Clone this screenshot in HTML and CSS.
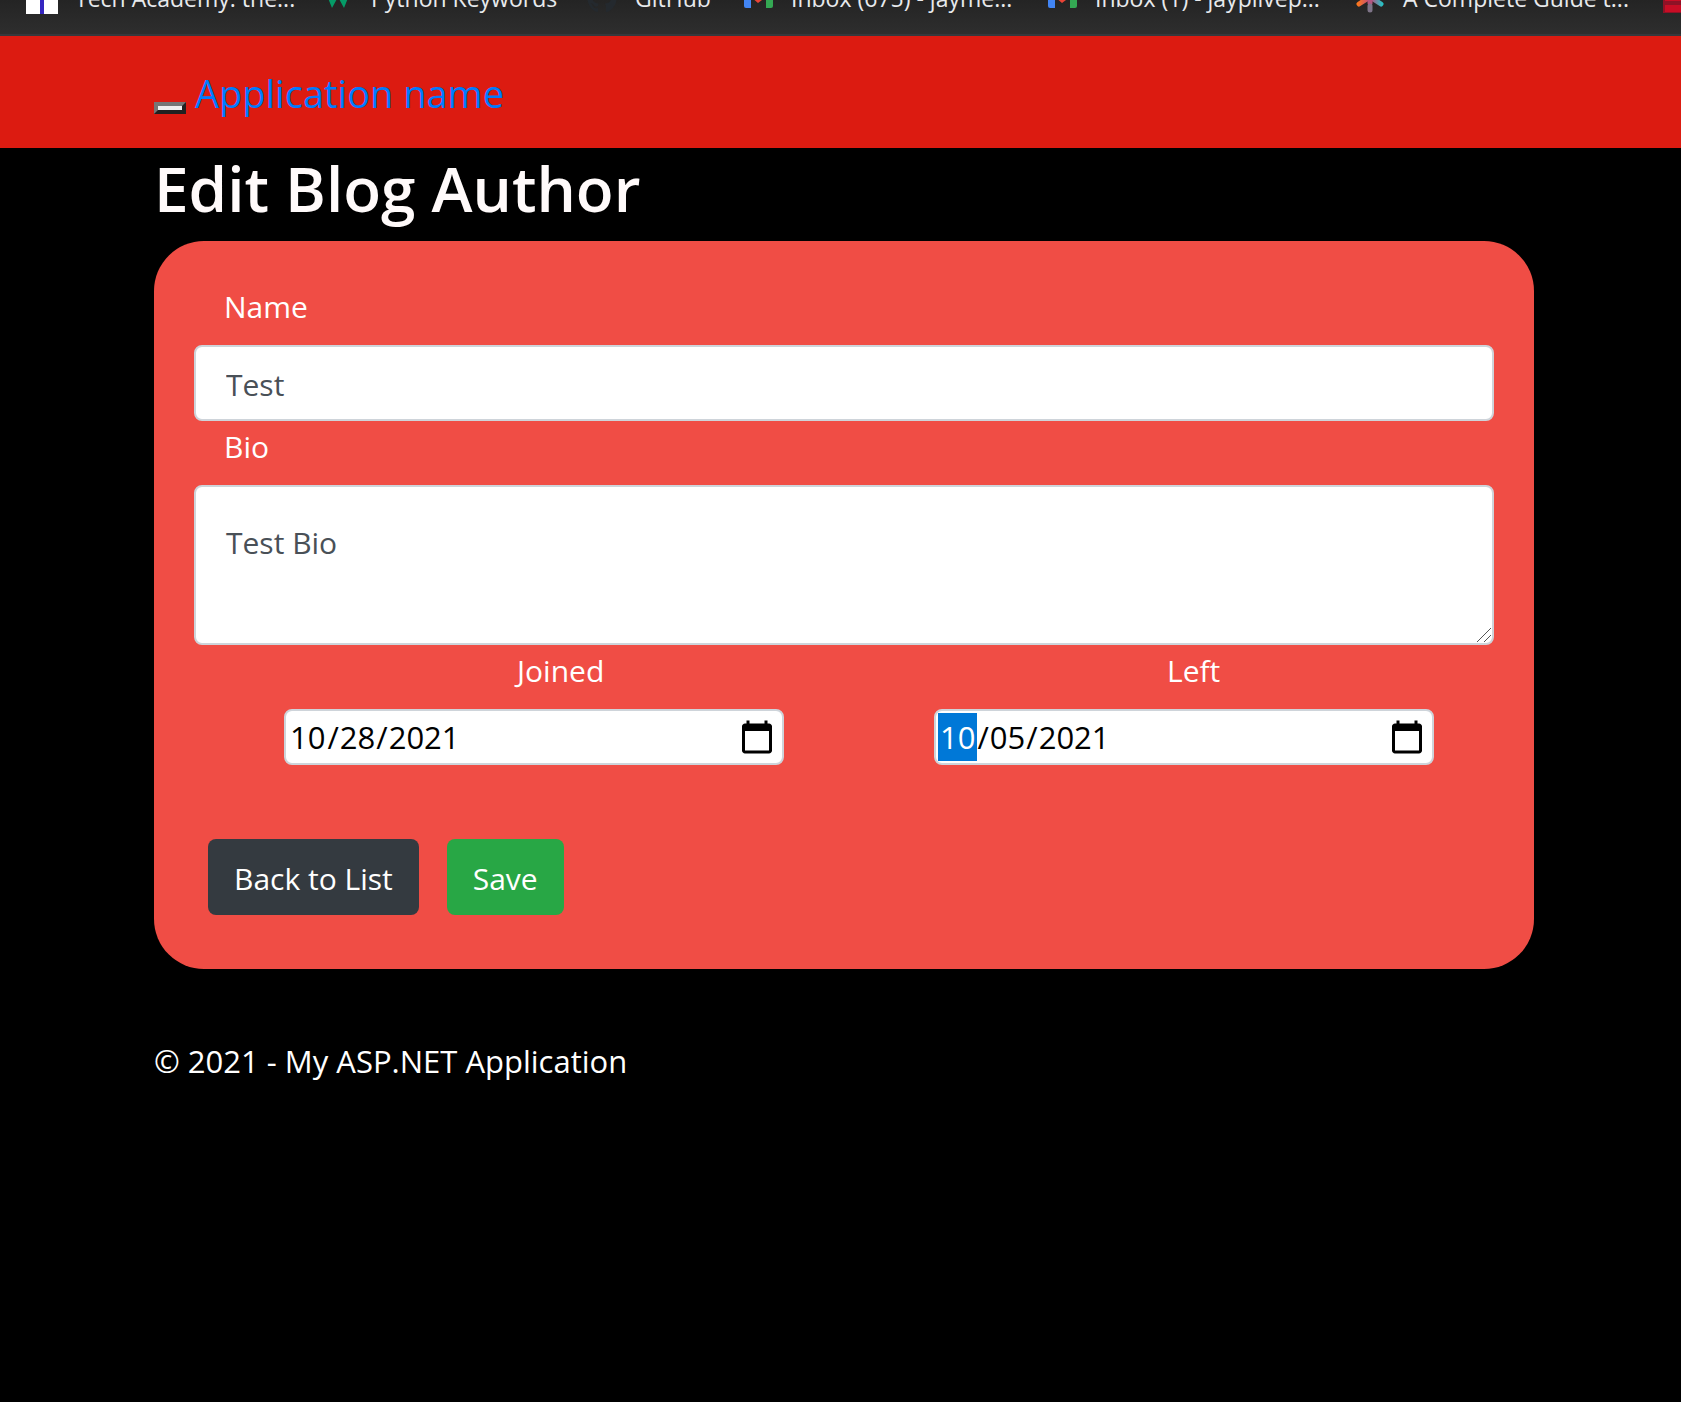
FILE: index.html
```html
<!DOCTYPE html>
<html lang="en-US">
<head>
<meta charset="utf-8">
<meta name="viewport" content="width=device-width, initial-scale=1">
<title>Edit Blog Author</title>
<link rel="stylesheet" href="styles.css">
</head>
<body>
<nav class="bookmarks" aria-label="Bookmarks">
  <a class="bookmark" href="#">
    <svg class="bookmark-icon" viewBox="0 0 32 32" aria-hidden="true"><path fill="#fff" d="M0 0h32v32H0z"/><path fill="#3526c0" d="M14 0h4v32h-4z"/></svg>
    <span>Tech Academy: the...</span>
  </a>
  <a class="bookmark" href="#">
    <svg class="bookmark-icon" viewBox="0 0 32 32" aria-hidden="true"><path fill="#059b67" d="M2 6h5l3 8 4-8h4l4 8 3-8h5l-8 20-6-11-6 11z"/></svg>
    <span>Python Keywords</span>
  </a>
  <a class="bookmark" href="#">
    <svg class="bookmark-icon" viewBox="0 0 32 32" aria-hidden="true"><path fill="#24292e" d="M16 1a15 15 0 0 0-5 29c1 0 1-.4 1-1v-3c-4 1-5-1-5.500-2.500C6 22 5 21.500 4.500 21c1.500 0 2.500 1 3 2 1.200 2 3 1.700 4.500 1 .1-1 .6-2 1-2.300-4-.5-7-2-7-7.200 0-1.700.6-3 1.500-4-.2-.5-.7-2 .1-4 0 0 1.300-.4 4.200 1.500a15 15 0 0 1 8 0C22.700 6 24 6.500 24 6.500c.8 2 .3 3.500.1 4 1 1 1.500 2.300 1.500 4 0 5.200-3 6.700-7 7.200.7.600 1.400 1.600 1.400 3.300v4c0 .6 0 1 1 1a15 15 0 0 0-5-29z"/></svg>
    <span>GitHub</span>
  </a>
  <a class="bookmark" href="#">
    <svg class="bookmark-icon" viewBox="0 0 32 32" aria-hidden="true"><path fill="#4285f4" d="M2 8h7v18H4a2 2 0 0 1-2-2z"/><path fill="#34a853" d="M24 8h7v16a2 2 0 0 1-2 2h-5z"/><path fill="#ea4335" d="M9 8l7 6 8-6v7l-8 6-7-6z"/></svg>
    <span>Inbox (675) - jayme...</span>
  </a>
  <a class="bookmark" href="#">
    <svg class="bookmark-icon" viewBox="0 0 32 32" aria-hidden="true"><path fill="#4285f4" d="M2 8h7v18H4a2 2 0 0 1-2-2z"/><path fill="#34a853" d="M24 8h7v16a2 2 0 0 1-2 2h-5z"/><path fill="#ea4335" d="M9 8l7 6 8-6v7l-8 6-7-6z"/></svg>
    <span>Inbox (1) - jayplivep...</span>
  </a>
  <a class="bookmark" href="#">
    <svg class="bookmark-icon" viewBox="0 0 32 32" aria-hidden="true"><defs><linearGradient id="star" x1="3" x2="29" y1="0" y2="0" gradientUnits="userSpaceOnUse"><stop stop-color="#ff7a18"/><stop offset=".5" stop-color="#c2497d"/><stop offset="1" stop-color="#1fc8c8"/></linearGradient></defs><path fill="none" stroke="url(#star)" stroke-width="5" stroke-linecap="round" d="M5 8l22 14M27 8L5 22"/><path fill="none" stroke="#b5557f" stroke-width="5" stroke-linecap="round" d="M16 3v18"/><path fill="none" stroke="#7e7488" stroke-width="5" stroke-linecap="round" d="M16 24v4"/></svg>
    <span>A Complete Guide t...</span>
  </a>
  <a class="bookmark" href="#" aria-label="Bookmark">
    <svg class="bookmark-icon" viewBox="0 0 32 32" aria-hidden="true"><path fill="#8e1226" d="M1 0h31v31H1z"/><path fill="#c90d25" d="M3 0h29v19H3zM3 23h29v7H3z"/></svg>
  </a>
</nav>

<header class="navbar">
  <button class="navbar-toggle" type="button" aria-label="Toggle navigation"></button>
  <a class="navbar-brand" href="#">Application name</a>
</header>

<main class="container">
  <h2 class="title">Edit Blog Author</h2>
  <form class="card">
    <label class="label" for="name">Name</label>
    <input class="control" id="name" type="text" value="Test">
    <label class="label" for="bio">Bio</label>
    <textarea class="control control-area" id="bio">Test Bio</textarea>
    <div class="dates">
      <div class="date-field">
        <label class="label label-date" for="joined">Joined</label>
        <input class="date" id="joined" type="date" value="2021-10-28">
      </div>
      <div class="date-field">
        <label class="label label-date" for="left">Left</label>
        <input class="date date-active" id="left" type="date" value="2021-10-05">
      </div>
    </div>
    <div class="actions">
      <button class="btn btn-dark" type="button">Back to List</button>
      <button class="btn btn-success" type="submit">Save</button>
    </div>
  </form>
  <footer class="footer">© 2021 - My ASP.NET Application</footer>
</main>
</body>
</html>
```
FILE: styles.css
```css
* {
  box-sizing: border-box;
}

body {
  margin: 0;
  background: #000;
  color: #fff;
  font-family: "Open Sans", "Noto Sans", sans-serif;
  font-size: 30px;
  line-height: 48px;
}

.bookmarks {
  display: grid;
  grid-template-columns: 296px 264px 156px 304px 308px 308px 32px;
  align-content: end;
  height: 36px;
  padding: 0 0 20px 26px;
  overflow: hidden;
  border-bottom: 2px solid #37383c;
  background: linear-gradient(#242424, #2e2e2e);
}

.bookmark {
  display: flex;
  gap: 17px;
  color: #e8eaed;
  font-size: 23px;
  line-height: 32px;
  text-decoration: none;
  white-space: nowrap;
}

.bookmark-icon {
  flex: none;
  width: 32px;
  height: 32px;
}

.navbar {
  display: flex;
  align-items: center;
  gap: 9px;
  height: 112px;
  padding: 2px 147px 0 154px;
  background: #dc1b11;
}

.navbar-toggle {
  width: 32px;
  height: 12px;
  margin-top: 30px;
  padding: 0;
  border: 4px solid;
  border-color: #767676 #212121 #212121 #767676;
  background: #efefef;
}

.navbar-brand {
  color: #007bff;
  font-size: 38px;
  line-height: 60px;
  text-decoration: none;
}

.container {
  padding: 0 147px 0 154px;
}

.title {
  margin: 0 0 16px;
  padding-top: 4px;
  color: #fffafa;
  font-size: 62px;
  font-weight: 600;
  line-height: 73px;
}

.card {
  padding: 40px 40px 54px;
  border-radius: 50px;
  background: #f04d45;
}

.label {
  display: block;
  margin-bottom: 16px;
  padding: 4px 0 0 30px;
  line-height: 44px;
}

.control {
  display: block;
  width: 100%;
  height: 76px;
  padding: 13px 30px 11px;
  border: 2px solid #ced4da;
  border-radius: 8px;
  background: #fff;
  color: #495057;
  font: inherit;
}

.control-area {
  height: 160px;
  padding-top: 32px;
  resize: vertical;
}

.control-area::-webkit-resizer {
  background: url("data:image/svg+xml,%3Csvg xmlns='http://www.w3.org/2000/svg' width='15' height='15'%3E%3Cpath d='M0 14L14 0M7 14L14 7' stroke='%23555'/%3E%3C/svg%3E") no-repeat;
}

.dates {
  display: grid;
  grid-template-columns: 1fr 1fr;
}

.date-field {
  padding: 0 60px 0 90px;
}

.label-date {
  padding-left: 233px;
}

.date {
  display: block;
  width: 100%;
  height: 56px;
  padding: 2px 7px 2px 2px;
  border: 2px solid #ced4da;
  border-radius: 8px;
  background: #fff;
  color: #000;
  font: inherit;
  font-size: 31px;
}

.date::-webkit-datetime-edit-month-field {
  padding: 3px 2px;
}

.date::-webkit-calendar-picker-indicator {
  width: 36px;
  height: 36px;
  padding: 0;
  background-size: 36px 36px;
}

.date-active::-webkit-datetime-edit-month-field {
  background: #0078d7;
  color: #fff;
}

.actions {
  display: flex;
  gap: 28px;
  margin-top: 74px;
  padding-left: 14px;
}

.btn {
  height: 76px;
  padding: 3px 26px 0;
  border: 0;
  border-radius: 8px;
  color: #fff;
  font: inherit;
}

.btn-dark {
  background: #343a40;
}

.btn-success {
  background: #28a745;
}

.footer {
  padding-top: 68px;
  font-size: 31px;
}
```
